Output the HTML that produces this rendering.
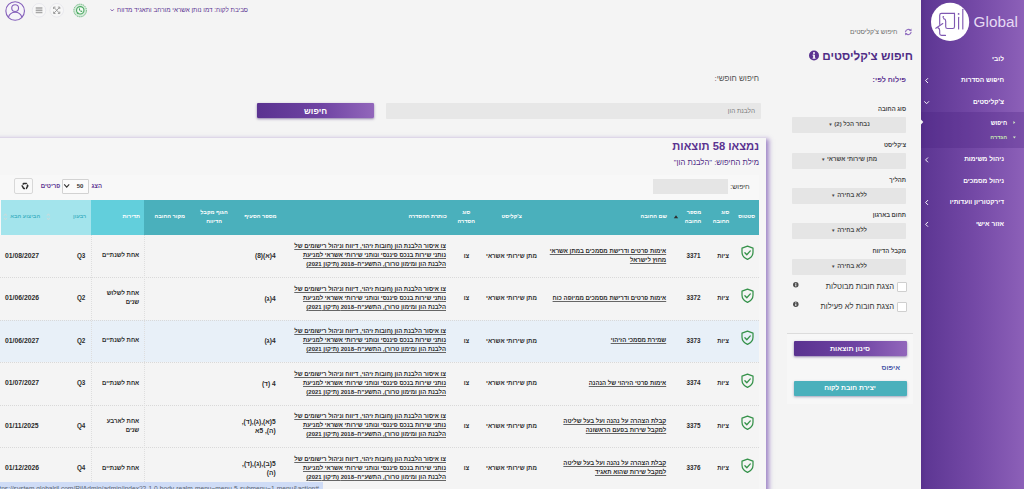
<!DOCTYPE html>
<html lang="he" dir="rtl">
<head>
<meta charset="utf-8">
<title>חיפוש צ'קליסטים</title>
<style>
*{box-sizing:border-box;margin:0;padding:0}
html,body{width:1024px;height:489px;overflow:hidden;background:#f4f4f4;font-family:"Liberation Sans",sans-serif;color:#333}
body{position:relative;direction:rtl}
.abs{position:absolute}
.t{position:absolute;white-space:nowrap;line-height:1;font-weight:bold}
.ml{position:absolute;line-height:9px;font-weight:bold;font-size:6px;color:#2b2b2b;text-align:right;white-space:nowrap}
.u{text-decoration:underline;text-decoration-thickness:.6px;text-underline-offset:1px;text-decoration-color:#666}
.hd{position:absolute;line-height:8.4px;font-weight:bold;font-size:5.5px;color:#fff;text-align:center;white-space:nowrap}
#side{left:920.500px;top:0;width:103.500px;height:489px;background:linear-gradient(90deg,#57318c 0%,#5e3794 5%,#7449a6 52%,#8c60b8 100%)}
#sub{left:920.500px;top:112.200px;width:103.500px;height:35.600px;background:rgba(70,30,125,.27)}
.dd{position:absolute;left:792px;width:114px;height:16px;background:#e5e5e5;border-radius:1px}
.cb{position:absolute;left:896.5px;width:10px;height:10px;background:#fff;border:1px solid #cfcfcf;border-radius:1px}
.btn{position:absolute;left:793.5px;width:113px;height:14.5px;border-radius:1px;box-shadow:0 1px 2.5px rgba(60,30,110,.55)}
#res{left:-12px;top:138px;width:777.500px;height:420px;background:#f6f6f6;box-shadow:2px 1px 4.500px .5px rgba(110,70,172,.62)}
#tbl{left:0;top:175px;width:759px;height:330px;background:#f8f8f8}
.row{position:absolute;left:0;width:759px;height:42.5px;border-top:1px dotted #d9d9d9;background:#f4f4f4}
.vl{position:absolute;top:234.5px;height:255px;width:0;border-left:1px dotted #dedede}
</style>
</head>
<body>
<!-- top bar -->
<svg class="abs" style="left:0;top:0" width="260" height="24" viewBox="0 0 260 24">
<circle cx="15.150" cy="11" r="9.300" fill="#f6f4f9" stroke="#8560ba" stroke-width="1.100"/>
<circle cx="15.150" cy="8.100" r="3.400" fill="none" stroke="#8560ba" stroke-width="1.100"/>
<path d="M8.400 17.300c.9-3.300 3.500-5.100 6.750-5.100s5.850 1.800 6.750 5.100" fill="none" stroke="#8560ba" stroke-width="1.100"/>
<circle cx="39" cy="10.300" r="6.800" fill="#f7f7f7" stroke="#e3e3ea" stroke-width=".7"/>
<path d="M35.700 8h6.700M35.700 10.200h6.700M35.700 12.400h6.700" stroke="#a6a6a6" stroke-width="1.500"/>
<circle cx="56.700" cy="10.300" r="6.800" fill="#f7f7f7" stroke="#e3e3ea" stroke-width=".7"/>
<path d="M53.600 9v-1.900h1.900M59.800 9v-1.900h-1.900M53.600 11.600v1.900h1.900M59.800 11.600v1.900h-1.900M54 7.500l5.400 5.600M59.400 7.500l-5.400 5.600" stroke="#989898" stroke-width=".95" fill="none"/>
<circle cx="80.150" cy="10.500" r="6.300" fill="#d6ebdb" stroke="#5fb274" stroke-width="1" stroke-dasharray="1.200 .8"/>
<circle cx="80.250" cy="10.300" r="3.700" fill="#f3faf4" stroke="#4aa961" stroke-width="1.100"/>
<path d="M76.700 14.200l.9-2.300 1.500 1.300z" fill="#4aa961"/>
<path d="M78.900 8.600c-.3 1.600 1.300 3.400 3 3.300l.5-.8-.9-.6-.5.400c-.5-.2-.9-.7-1.200-1.200l.4-.5-.5-1z" fill="#3f9e56"/>
<path d="M110.600 9.300l1.600 1.700 1.600-1.700" stroke="#6a3fa0" stroke-width=".8" fill="none"/>
</svg>
<div class="t" style="top:6.90px;font-size:6.3px;color:#5b3391;font-weight:normal;right:776.00px;">סביבת לקוח: דמו נותן אשראי מורחב ותאגיד מדווח</div>
<!-- sidebar -->
<div id="side" class="abs"></div><div id="sub" class="abs"></div>
<svg class="abs" style="left:921px;top:0" width="103" height="489" viewBox="0 0 103 489">
<circle cx="29.1" cy="21.9" r="19.1" fill="#fff"/>
<g fill="none" stroke="#7f58b2" stroke-width="1.150" stroke-linecap="round" stroke-linejoin="round">
<path d="M33.500 13.400H20.500Q18.700 13.400 18.700 15.200V24.300"/>
<path d="M21.800 23.600L14.800 28.300"/>
<path d="M16.800 27.600Q18.700 28.400 18.700 30.500V33.600Q18.700 35.400 20.500 35.400H24.500"/>
<path d="M22.600 18.600Q24.700 19 24.700 21V26.700Q24.700 28.500 26.500 28.500H31.700Q33.500 28.500 33.500 26.700V13.400"/>
<path d="M37.600 17.200V29"/>
<path d="M41.800 9.200V29"/>
</g>
<circle cx="22.300" cy="16.900" r=".85" fill="#7f58b2"/>
<circle cx="37.600" cy="13.900" r=".9" fill="#7f58b2"/>
<g fill="none" stroke="#fff" stroke-width="1" stroke-linecap="round" stroke-linejoin="round" opacity=".95">
<path d="M6.700 78.500l-2.100 2.100 2.100 2.100"/>
<path d="M3.500 101.600l2.100 2.100 2.100-2.100"/>
<path d="M6.700 157.800l-2.100 2.100 2.100 2.100"/>
<path d="M6.700 200.400l-2.100 2.100 2.100 2.100"/>
<path d="M6.700 222.200l-2.100 2.100 2.100 2.100"/>
</g>
<path d="M0 119.500l2.300 2.500-2.300 2.500z" fill="#f4f4f4"/>
<path d="M92.400 121l1.900 1.500-1.900 1.500z" fill="#cfe8c4"/>
<path d="M91.900 136.600h3l-1.500 1.900z" fill="#cfe8c4"/>
</svg>
<div class="t" style="top:14.30px;font-size:15.3px;color:#e6daf4;font-weight:normal;left:973.60px;direction:ltr;letter-spacing:0;">Global</div>
<div class="t" style="top:55.66px;font-size:6.55px;color:#fff;right:20.00px;">לובי</div>
<div class="t" style="top:77.16px;font-size:6.55px;color:#fff;right:20.00px;">חיפוש הסדרות</div>
<div class="t" style="top:99.16px;font-size:6.55px;color:#fff;right:20.00px;">צ'קליסטים</div>
<div class="t" style="top:156.16px;font-size:6.55px;color:#fff;right:20.00px;">ניהול משימות</div>
<div class="t" style="top:177.66px;font-size:6.55px;color:#fff;right:20.00px;">ניהול מסמכים</div>
<div class="t" style="top:199.16px;font-size:6.55px;color:#fff;right:20.00px;">דירקטוריון וועדותיו</div>
<div class="t" style="top:220.66px;font-size:6.55px;color:#fff;right:20.00px;">אזור אישי</div>
<div class="t" style="top:119.76px;font-size:6px;color:#fff;right:16.90px;">חיפוש</div>
<div class="t" style="top:135.02px;font-size:5.7px;color:#c6e6b2;right:16.90px;">הגדרה</div>
<!-- filter panel -->
<svg class="abs" style="left:800px;top:24.800px" width="120" height="40" viewBox="0 0 120 40">
<g transform="translate(0.300 -1)"><g fill="none" stroke="#9270c0" stroke-width="1.150" stroke-linecap="round">
<path d="M105.200 7.800a2.900 2.900 0 0 1 5.100-1.400"/><path d="M110.800 8.200a2.900 2.900 0 0 1-5.100 1.400"/>
</g>
<path d="M111.200 4.500v2.600h-2.600zM104.800 11.500v-2.600h2.600z" fill="#9270c0"/></g>
<circle cx="14" cy="30.500" r="5" fill="#5b3391"/>
<rect x="13.200" y="29.700" width="1.700" height="3.600" fill="#fff"/><circle cx="14" cy="27.900" r="1" fill="#fff"/>
<rect x="12.500" y="32.800" width="3.100" height=".8" fill="#fff"/><rect x="12.500" y="29.700" width="1.500" height=".8" fill="#fff"/>
</svg>
<div class="t" style="top:29.38px;font-size:6.7px;color:#6d6d6d;font-weight:normal;right:126.50px;">חיפוש צ'קליסטים</div>
<div class="t" style="top:49.68px;font-size:11.7px;color:#4f2d86;right:111.00px;">חיפוש צ'קליסטים</div>
<div class="t" style="top:76.41px;font-size:7.2px;color:#5b3391;right:118.00px;">פילוח לפי:</div>
<div class="t" style="top:107.01px;font-size:5.9px;color:#444;right:118.00px;">סוג החובה</div>
<div class="t" style="top:142.51px;font-size:5.9px;color:#444;right:118.00px;">צ'קליסט</div>
<div class="t" style="top:178.01px;font-size:5.9px;color:#444;right:118.00px;">תהליך</div>
<div class="t" style="top:213.21px;font-size:5.9px;color:#444;right:118.00px;">תחום בארגון</div>
<div class="t" style="top:248.71px;font-size:5.9px;color:#444;right:118.00px;">מקבל הדיווח</div>
<div class="dd" style="top:117px"></div>
<div class="t" style="top:120.96px;font-size:6px;color:#4a4a4a;left:699.00px;width:300px;text-align:center;">נבחר הכל (2) <span style="font-size:4.500px;vertical-align:.5px">&#9660;</span></div>
<div class="dd" style="top:152.5px"></div>
<div class="t" style="top:156.46px;font-size:6px;color:#4a4a4a;left:699.00px;width:300px;text-align:center;">מתן שירותי אשראי <span style="font-size:4.500px;vertical-align:.5px">&#9660;</span></div>
<div class="dd" style="top:188px"></div>
<div class="t" style="top:191.96px;font-size:6px;color:#4a4a4a;left:699.00px;width:300px;text-align:center;">ללא בחירה <span style="font-size:4.500px;vertical-align:.5px">&#9660;</span></div>
<div class="dd" style="top:223.3px"></div>
<div class="t" style="top:227.26px;font-size:6px;color:#4a4a4a;left:699.00px;width:300px;text-align:center;">ללא בחירה <span style="font-size:4.500px;vertical-align:.5px">&#9660;</span></div>
<div class="dd" style="top:258.6px"></div>
<div class="t" style="top:262.56px;font-size:6px;color:#4a4a4a;left:699.00px;width:300px;text-align:center;">ללא בחירה <span style="font-size:4.500px;vertical-align:.5px">&#9660;</span></div>
<div class="cb" style="top:282px"></div><div class="cb" style="top:301.500px"></div>
<div class="t" style="top:283.20px;font-size:7.6px;color:#333;font-weight:normal;right:130.00px;">הצגת חובות מבוטלות</div>
<div class="t" style="top:302.70px;font-size:7.6px;color:#333;font-weight:normal;right:130.00px;">הצגת חובות לא פעילות</div>
<svg class="abs" style="left:790px;top:280px" width="12" height="32" viewBox="0 0 12 32">
<circle cx="5.800" cy="4.800" r="2.750" fill="#4d4d4d"/><rect x="5.300" y="4.300" width="1" height="2.100" fill="#fff"/><rect x="5.300" y="2.900" width="1" height=".9" fill="#fff"/>
<circle cx="5.800" cy="24.300" r="2.750" fill="#4d4d4d"/><rect x="5.300" y="23.800" width="1" height="2.100" fill="#fff"/><rect x="5.300" y="22.400" width="1" height=".9" fill="#fff"/>
</svg>
<div class="abs" style="left:786.500px;top:332.500px;width:126.500px;height:71.500px;background:#f7f7f7;border-top:1px solid #dcdcdc"></div>
<div class="btn" style="top:341px;background:linear-gradient(90deg,#5a3290,#6f44a3 55%,#9266bb)"></div>
<div class="t" style="top:345.87px;font-size:7.1px;color:#fff;left:700.00px;width:300px;text-align:center;">סינון תוצאות</div>
<div class="t" style="top:364.87px;font-size:7.1px;color:#4a58a8;right:124.00px;">איפוס</div>
<div class="btn" style="top:381.200px;background:#4ab0bc;box-shadow:0 1px 2.500px rgba(60,60,110,.45)"></div>
<div class="t" style="top:385.03px;font-size:6.8px;color:#fff;left:700.00px;width:300px;text-align:center;">יצירת חובת לקוח</div>
<!-- free search -->
<div class="t" style="top:74.98px;font-size:8px;color:#505050;font-weight:normal;right:265.00px;">חיפוש חופשי:</div>
<div class="abs" style="left:386px;top:103px;width:375px;height:15.500px;background:#e7e7e7;border-radius:1px"></div>
<div class="t" style="top:108.04px;font-size:6.4px;color:#777;font-weight:normal;right:269.00px;">הלבנת הון</div>
<div class="abs" style="left:257.200px;top:102.800px;width:116.600px;height:15.400px;border-radius:1px;background:linear-gradient(90deg,#5a3290,#6f44a3 55%,#9266bb);box-shadow:0 1px 2.500px rgba(60,30,110,.55)"></div>
<div class="t" style="top:107.36px;font-size:8.4px;color:#fff;left:165.60px;width:300px;text-align:center;">חיפוש</div>
<!-- results -->
<div id="res" class="abs"></div><div id="tbl" class="abs"></div>
<div class="t" style="top:140.85px;font-size:11.2px;color:#5b3391;right:265.00px;">נמצאו 58 תוצאות</div>
<div class="t" style="top:159.44px;font-size:7.7px;color:#4f2d86;font-weight:normal;right:265.00px;">מילת החיפוש: "הלבנת הון"</div>
<div class="t" style="top:182.62px;font-size:7px;color:#3c3c3c;font-weight:normal;right:274.30px;">חיפוש:</div>
<div class="abs" style="left:653px;top:179px;width:75px;height:14.700px;background:#e5e5e5"></div>
<div class="t" style="top:184.11px;font-size:5.9px;color:#5b3391;right:922.10px;">הצג</div>
<div class="abs" style="left:62.200px;top:178.600px;width:27.200px;height:15px;background:#fbfbfb;border:1px solid #d2d2d2;border-radius:1px"></div>
<div class="t" style="top:183.36px;font-size:6px;color:#333;left:76.70px;direction:ltr;">50</div>
<svg class="abs" style="left:62.800px;top:182.400px" width="8" height="8" viewBox="0 0 8 8"><path d="M1.200 2.300l2.500 2.800 2.500-2.800" fill="none" stroke="#333" stroke-width="1.100"/></svg>
<div class="t" style="top:183.31px;font-size:6.1px;color:#5b3391;right:963.70px;">פריטים</div>
<div class="abs" style="left:14.200px;top:178.100px;width:19.200px;height:16.300px;background:#f9f9f9;border:1px solid #d8d8d8;border-radius:2px"></div>
<svg class="abs" style="left:20.500px;top:181.800px" width="8" height="8" viewBox="0 0 8 8"><path d="M6.800 3.900L5.400 6.400H2.600L1.200 3.900L2.600 1.400H5.400Z" fill="none" stroke="#2e2e2e" stroke-width="1.500" stroke-linejoin="round" stroke-dasharray="4.900 .8" stroke-dashoffset="1.500"/></svg>
<div class="abs" style="left:1px;top:199.500px;width:90px;height:35px;background:#a3e4ec"></div>
<div class="abs" style="left:90.700px;top:199.500px;width:53.500px;height:35px;background:#62cfdc"></div>
<div class="abs" style="left:144.200px;top:199.500px;width:614.800px;height:35px;background:#4ab0bc"></div>
<div class="hd" style="top:212.30px;font-size:5.5px;color:#fff;left:686.70px;width:120px;">סטטוס</div>
<div class="hd" style="top:208.10px;font-size:5.5px;color:#fff;right:294.70px;text-align:right;">סוג<br>החובה</div>
<div class="hd" style="top:208.10px;font-size:5.5px;color:#fff;right:322.70px;text-align:right;">מספר<br>החובה</div>
<div class="hd" style="top:212.30px;font-size:5.5px;color:#fff;right:357.00px;text-align:right;">שם החובה</div>
<svg class="abs" style="left:673px;top:214px" width="6" height="6" viewBox="0 0 6 6"><path d="M.8 4.300l2.200-3 2.200 3z" fill="#2f2f2f"/></svg>
<div class="hd" style="top:212.30px;font-size:5.5px;color:#fff;left:451.70px;width:120px;">צ'קליסט</div>
<div class="hd" style="top:208.10px;font-size:5.5px;color:#fff;left:406.30px;width:120px;">סוג<br>הסדרה</div>
<div class="hd" style="top:212.30px;font-size:5.5px;color:#fff;right:577.30px;text-align:right;">כותרת ההסדרה</div>
<div class="hd" style="top:212.30px;font-size:5.5px;color:#fff;right:747.50px;text-align:right;">מספר הסעיף</div>
<div class="hd" style="top:208.10px;font-size:5.5px;color:#fff;left:154.00px;width:120px;">הגוף מקבל<br>הדיווח</div>
<div class="hd" style="top:212.30px;font-size:5.5px;color:#fff;left:109.80px;width:120px;">מקור החובה</div>
<div class="hd" style="top:212.30px;font-size:5.5px;color:#fff;right:884.00px;text-align:right;">תדירות</div>
<div class="hd" style="top:212.30px;font-size:5.5px;color:#45b3c4;right:937.80px;text-align:right;">רבעון</div>
<div class="hd" style="top:212.30px;font-size:5.5px;color:#45b3c4;right:983.90px;text-align:right;">הביצוע הבא</div>
<svg class="abs" style="left:2px;top:212px" width="52" height="10" viewBox="0 0 52 10"><g fill="none" stroke="#cfd9d8" stroke-width=".9">
<path d="M2 3.800l1.400-2 1.400 2M2 5.800l1.400 2 1.400-2"/><path d="M45 3.800l1.400-2 1.400 2M45 5.800l1.400 2 1.400-2"/></g></svg>
<div class="row" style="top:234.5px;border-top:0;"></div>
<svg class="abs" style="left:739.800px;top:245.30px" width="15" height="16" viewBox="0 0 15 16"><path d="M7.500 1.100L13 3.200V7.300C13 10.500 10.800 12.900 7.500 14.300C4.200 12.900 2 10.500 2 7.300V3.200Z" fill="none" stroke="#35924a" stroke-width="1.250" stroke-linejoin="round"/><path d="M4.900 7.700l1.900 2 3.500-3.800" fill="none" stroke="#35924a" stroke-width="1.300" stroke-linecap="round" stroke-linejoin="round"/></svg>
<div class="t" style="top:252.76px;font-size:6px;color:#2b2b2b;left:573.00px;width:300px;text-align:center;">ציות</div>
<div class="t" style="top:252.91px;font-size:6.3px;color:#2b2b2b;left:543.50px;width:300px;text-align:center;direction:ltr;">3371</div>
<div class="ml" style="top:246.76px;right:357.80px;font-size:6px;color:#2b2b2b;line-height:9px"><span class="u">אימות פרטים ודרישת מסמכים במתן אשראי<br>מחוץ לישראל</span></div>
<div class="t" style="top:252.71px;font-size:6.1px;color:#2b2b2b;left:361.50px;width:300px;text-align:center;">מתן שירותי אשראי</div>
<div class="t" style="top:252.76px;font-size:6px;color:#2b2b2b;left:316.40px;width:300px;text-align:center;">צו</div>
<div class="ml" style="top:242.26px;right:578.00px;font-size:6px;color:#2b2b2b;line-height:9px"><span class="u">צו איסור הלבנת הון (חובות זיהוי, דיווח וניהול רישומים של<br>נותני שירות בנכס פיננסי ונותני שירותי אשראי למניעת<br>הלבנת הון ומימון טרור), התשע"ח–2018 (תיקון 2021)</span></div>
<div class="ml" style="top:251.24px;right:748.40px;font-size:6.6px;color:#2b2b2b;line-height:9px">4(א)(8)</div>
<div class="ml" style="top:251.26px;right:884.80px;font-size:6px;color:#2b2b2b;line-height:9px">אחת לשנתיים</div>
<div class="t" style="top:252.91px;font-size:6.3px;color:#2b2b2b;right:938.70px;direction:ltr;">Q3</div>
<div class="t" style="top:252.67px;font-size:6.8px;color:#2b2b2b;left:5.00px;direction:ltr;">01/08/2027</div>
<div class="row" style="top:277.0px;"></div>
<svg class="abs" style="left:739.800px;top:287.80px" width="15" height="16" viewBox="0 0 15 16"><path d="M7.500 1.100L13 3.200V7.300C13 10.500 10.800 12.900 7.500 14.300C4.200 12.900 2 10.500 2 7.300V3.200Z" fill="none" stroke="#35924a" stroke-width="1.250" stroke-linejoin="round"/><path d="M4.900 7.700l1.900 2 3.500-3.800" fill="none" stroke="#35924a" stroke-width="1.300" stroke-linecap="round" stroke-linejoin="round"/></svg>
<div class="t" style="top:295.26px;font-size:6px;color:#2b2b2b;left:573.00px;width:300px;text-align:center;">ציות</div>
<div class="t" style="top:295.41px;font-size:6.3px;color:#2b2b2b;left:543.50px;width:300px;text-align:center;direction:ltr;">3372</div>
<div class="ml" style="top:293.76px;right:357.80px;font-size:6px;color:#2b2b2b;line-height:9px"><span class="u">אימות פרטים ודרישת מסמכים ממיופה כוח</span></div>
<div class="t" style="top:295.21px;font-size:6.1px;color:#2b2b2b;left:361.50px;width:300px;text-align:center;">מתן שירותי אשראי</div>
<div class="t" style="top:295.26px;font-size:6px;color:#2b2b2b;left:316.40px;width:300px;text-align:center;">צו</div>
<div class="ml" style="top:284.76px;right:578.00px;font-size:6px;color:#2b2b2b;line-height:9px"><span class="u">צו איסור הלבנת הון (חובות זיהוי, דיווח וניהול רישומים של<br>נותני שירות בנכס פיננסי ונותני שירותי אשראי למניעת<br>הלבנת הון ומימון טרור), התשע"ח–2018 (תיקון 2021)</span></div>
<div class="ml" style="top:293.74px;right:748.40px;font-size:6.6px;color:#2b2b2b;line-height:9px">4(ג)</div>
<div class="ml" style="top:289.26px;right:884.80px">אחת לשלוש<br>שנים</div>
<div class="t" style="top:295.41px;font-size:6.3px;color:#2b2b2b;right:938.70px;direction:ltr;">Q2</div>
<div class="t" style="top:295.17px;font-size:6.8px;color:#2b2b2b;left:5.00px;direction:ltr;">01/06/2026</div>
<div class="row" style="top:319.5px;background:#e8f0f8;"></div>
<svg class="abs" style="left:739.800px;top:330.30px" width="15" height="16" viewBox="0 0 15 16"><path d="M7.500 1.100L13 3.200V7.300C13 10.500 10.800 12.900 7.500 14.300C4.200 12.900 2 10.500 2 7.300V3.200Z" fill="none" stroke="#35924a" stroke-width="1.250" stroke-linejoin="round"/><path d="M4.900 7.700l1.900 2 3.500-3.800" fill="none" stroke="#35924a" stroke-width="1.300" stroke-linecap="round" stroke-linejoin="round"/></svg>
<div class="t" style="top:337.76px;font-size:6px;color:#2b2b2b;left:573.00px;width:300px;text-align:center;">ציות</div>
<div class="t" style="top:337.91px;font-size:6.3px;color:#2b2b2b;left:543.50px;width:300px;text-align:center;direction:ltr;">3373</div>
<div class="ml" style="top:336.26px;right:357.80px;font-size:6px;color:#2b2b2b;line-height:9px"><span class="u">שמירת מסמכי הזיהוי</span></div>
<div class="t" style="top:337.71px;font-size:6.1px;color:#2b2b2b;left:361.50px;width:300px;text-align:center;">מתן שירותי אשראי</div>
<div class="t" style="top:337.76px;font-size:6px;color:#2b2b2b;left:316.40px;width:300px;text-align:center;">צו</div>
<div class="ml" style="top:327.26px;right:578.00px;font-size:6px;color:#2b2b2b;line-height:9px"><span class="u">צו איסור הלבנת הון (חובות זיהוי, דיווח וניהול רישומים של<br>נותני שירות בנכס פיננסי ונותני שירותי אשראי למניעת<br>הלבנת הון ומימון טרור), התשע"ח–2018 (תיקון 2021)</span></div>
<div class="ml" style="top:336.24px;right:748.40px;font-size:6.6px;color:#2b2b2b;line-height:9px">4(ג)</div>
<div class="ml" style="top:336.26px;right:884.80px;font-size:6px;color:#2b2b2b;line-height:9px">אחת לשנתיים</div>
<div class="t" style="top:337.91px;font-size:6.3px;color:#2b2b2b;right:938.70px;direction:ltr;">Q2</div>
<div class="t" style="top:337.67px;font-size:6.8px;color:#2b2b2b;left:5.00px;direction:ltr;">01/06/2027</div>
<div class="row" style="top:362.0px;"></div>
<svg class="abs" style="left:739.800px;top:372.80px" width="15" height="16" viewBox="0 0 15 16"><path d="M7.500 1.100L13 3.200V7.300C13 10.500 10.800 12.900 7.500 14.300C4.200 12.900 2 10.500 2 7.300V3.200Z" fill="none" stroke="#35924a" stroke-width="1.250" stroke-linejoin="round"/><path d="M4.900 7.700l1.900 2 3.500-3.800" fill="none" stroke="#35924a" stroke-width="1.300" stroke-linecap="round" stroke-linejoin="round"/></svg>
<div class="t" style="top:380.26px;font-size:6px;color:#2b2b2b;left:573.00px;width:300px;text-align:center;">ציות</div>
<div class="t" style="top:380.41px;font-size:6.3px;color:#2b2b2b;left:543.50px;width:300px;text-align:center;direction:ltr;">3374</div>
<div class="ml" style="top:378.76px;right:357.80px;font-size:6px;color:#2b2b2b;line-height:9px"><span class="u">אימות פרטי הזיהוי של הנהנה</span></div>
<div class="t" style="top:380.21px;font-size:6.1px;color:#2b2b2b;left:361.50px;width:300px;text-align:center;">מתן שירותי אשראי</div>
<div class="t" style="top:380.26px;font-size:6px;color:#2b2b2b;left:316.40px;width:300px;text-align:center;">צו</div>
<div class="ml" style="top:369.76px;right:578.00px;font-size:6px;color:#2b2b2b;line-height:9px"><span class="u">צו איסור הלבנת הון (חובות זיהוי, דיווח וניהול רישומים של<br>נותני שירות בנכס פיננסי ונותני שירותי אשראי למניעת<br>הלבנת הון ומימון טרור), התשע"ח–2018 (תיקון 2021)</span></div>
<div class="ml" style="top:378.74px;right:748.40px;font-size:6.6px;color:#2b2b2b;line-height:9px">4 (ד)</div>
<div class="ml" style="top:378.76px;right:884.80px;font-size:6px;color:#2b2b2b;line-height:9px">אחת לשנתיים</div>
<div class="t" style="top:380.41px;font-size:6.3px;color:#2b2b2b;right:938.70px;direction:ltr;">Q3</div>
<div class="t" style="top:380.17px;font-size:6.8px;color:#2b2b2b;left:5.00px;direction:ltr;">01/07/2027</div>
<div class="row" style="top:404.5px;"></div>
<svg class="abs" style="left:739.800px;top:415.30px" width="15" height="16" viewBox="0 0 15 16"><path d="M7.500 1.100L13 3.200V7.300C13 10.500 10.800 12.900 7.500 14.300C4.200 12.900 2 10.500 2 7.300V3.200Z" fill="none" stroke="#35924a" stroke-width="1.250" stroke-linejoin="round"/><path d="M4.900 7.700l1.900 2 3.500-3.800" fill="none" stroke="#35924a" stroke-width="1.300" stroke-linecap="round" stroke-linejoin="round"/></svg>
<div class="t" style="top:422.76px;font-size:6px;color:#2b2b2b;left:573.00px;width:300px;text-align:center;">ציות</div>
<div class="t" style="top:422.91px;font-size:6.3px;color:#2b2b2b;left:543.50px;width:300px;text-align:center;direction:ltr;">3375</div>
<div class="ml" style="top:416.76px;right:357.80px;font-size:6px;color:#2b2b2b;line-height:9px"><span class="u">קבלת הצהרה על נהנה ועל בעל שליטה<br>למקבל שירות בפעם הראשונה</span></div>
<div class="t" style="top:422.71px;font-size:6.1px;color:#2b2b2b;left:361.50px;width:300px;text-align:center;">מתן שירותי אשראי</div>
<div class="t" style="top:422.76px;font-size:6px;color:#2b2b2b;left:316.40px;width:300px;text-align:center;">צו</div>
<div class="ml" style="top:412.26px;right:578.00px;font-size:6px;color:#2b2b2b;line-height:9px"><span class="u">צו איסור הלבנת הון (חובות זיהוי, דיווח וניהול רישומים של<br>נותני שירות בנכס פיננסי ונותני שירותי אשראי למניעת<br>הלבנת הון ומימון טרור), התשע"ח–2018 (תיקון 2021)</span></div>
<div class="ml" style="top:416.74px;right:748.40px;font-size:6.6px;color:#2b2b2b;line-height:9px">5(א),(ג),(ד),<br>(ה), 5א</div>
<div class="ml" style="top:416.76px;right:884.80px">אחת לארבע<br>שנים</div>
<div class="t" style="top:422.91px;font-size:6.3px;color:#2b2b2b;right:938.70px;direction:ltr;">Q4</div>
<div class="t" style="top:422.67px;font-size:6.8px;color:#2b2b2b;left:5.00px;direction:ltr;">01/11/2025</div>
<div class="row" style="top:447.0px;"></div>
<svg class="abs" style="left:739.800px;top:457.80px" width="15" height="16" viewBox="0 0 15 16"><path d="M7.500 1.100L13 3.200V7.300C13 10.500 10.800 12.900 7.500 14.300C4.200 12.900 2 10.500 2 7.300V3.200Z" fill="none" stroke="#35924a" stroke-width="1.250" stroke-linejoin="round"/><path d="M4.900 7.700l1.900 2 3.500-3.800" fill="none" stroke="#35924a" stroke-width="1.300" stroke-linecap="round" stroke-linejoin="round"/></svg>
<div class="t" style="top:465.26px;font-size:6px;color:#2b2b2b;left:573.00px;width:300px;text-align:center;">ציות</div>
<div class="t" style="top:465.41px;font-size:6.3px;color:#2b2b2b;left:543.50px;width:300px;text-align:center;direction:ltr;">3376</div>
<div class="ml" style="top:459.26px;right:357.80px;font-size:6px;color:#2b2b2b;line-height:9px"><span class="u">קבלת הצהרה על נהנה ועל בעל שליטה<br>למקבל שירות שהוא תאגיד</span></div>
<div class="t" style="top:465.21px;font-size:6.1px;color:#2b2b2b;left:361.50px;width:300px;text-align:center;">מתן שירותי אשראי</div>
<div class="t" style="top:465.26px;font-size:6px;color:#2b2b2b;left:316.40px;width:300px;text-align:center;">צו</div>
<div class="ml" style="top:454.76px;right:578.00px;font-size:6px;color:#2b2b2b;line-height:9px"><span class="u">צו איסור הלבנת הון (חובות זיהוי, דיווח וניהול רישומים של<br>נותני שירות בנכס פיננסי ונותני שירותי אשראי למניעת<br>הלבנת הון ומימון טרור), התשע"ח–2018 (תיקון 2021)</span></div>
<div class="ml" style="top:459.24px;right:748.40px;font-size:6.6px;color:#2b2b2b;line-height:9px">5(ב),(ג),(ד),<br>(ה)</div>
<div class="ml" style="top:463.76px;right:884.80px;font-size:6px;color:#2b2b2b;line-height:9px">אחת לשנתיים</div>
<div class="t" style="top:465.41px;font-size:6.3px;color:#2b2b2b;right:938.70px;direction:ltr;">Q4</div>
<div class="t" style="top:465.17px;font-size:6.8px;color:#2b2b2b;left:5.00px;direction:ltr;">01/12/2026</div>
<div class="vl" style="left:90.500px"></div><div class="vl" style="left:144px"></div>
<div class="abs" style="left:0;top:481.700px;width:322.600px;height:8px;background:#cfdcf6;overflow:hidden;direction:ltr"><div style="position:absolute;left:-2.500px;top:4.100px;font-size:6.600px;line-height:1;color:#5d6674;white-space:nowrap;font-weight:normal">ttps://system.globalril.com/RilAdmin/admin/index?2-1.0-body-realm-menu~menu-5-submenu~1-menu&amp;action#</div></div>
</body>
</html>
